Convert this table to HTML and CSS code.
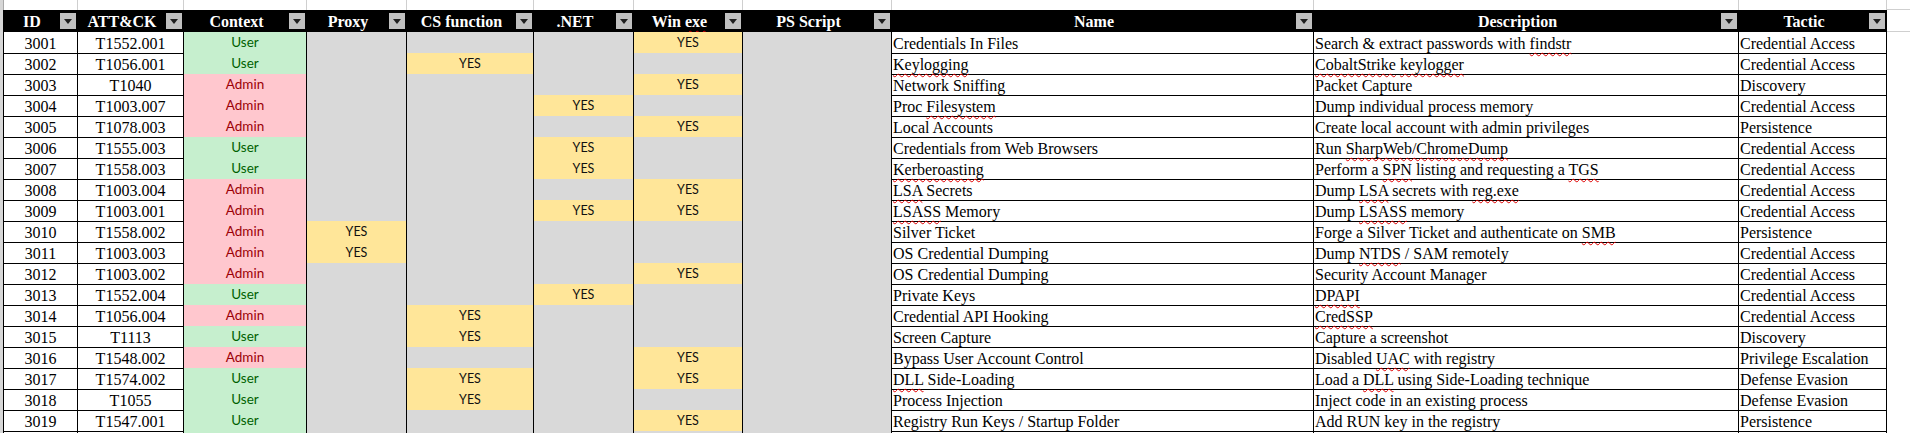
FILE: index.html
```html
<!DOCTYPE html>
<html>
<head>
<meta charset="utf-8">
<link rel="stylesheet" href="styles.css">
</head>
<body>
<div class="strip"></div>
<div class="sheet">
  <div class="row top">
    <div></div><div></div><div></div><div></div><div></div><div></div><div></div><div></div><div></div><div></div><div></div><div class="fill"></div>
  </div>
  <div class="row head">
    <div class="h"><span class="hl">ID</span><span class="btn"></span></div>
    <div class="h"><span class="hl">ATT&amp;CK</span><span class="btn"></span></div>
    <div class="h"><span class="hl">Context</span><span class="btn"></span></div>
    <div class="h"><span class="hl">Proxy</span><span class="btn"></span></div>
    <div class="h"><span class="hl">CS function</span><span class="btn"></span></div>
    <div class="h"><span class="hl">.NET</span><span class="btn"></span></div>
    <div class="h"><span class="hl">Win <span class="sp">exe</span></span><span class="btn"></span></div>
    <div class="h"><span class="hl">PS Script</span><span class="btn"></span></div>
    <div class="h"><span class="hl">Name</span><span class="btn"></span></div>
    <div class="h"><span class="hl">Description</span><span class="btn"></span></div>
    <div class="h"><span class="hl">Tactic</span><span class="btn"></span></div>
    <div class="fill"></div>
  </div>

  <div class="row"><div class="num">3001</div><div class="num">T1552.001</div><div class="ctx user">User</div><div class="no"></div><div class="no"></div><div class="no"></div><div class="yes">YES</div><div class="no"></div><div class="txt">Credentials In Files</div><div class="txt">Search &amp; extract passwords with <span class="sp">findstr</span></div><div class="txt">Credential Access</div><div class="fill"></div></div>
  <div class="row"><div class="num">3002</div><div class="num">T1056.001</div><div class="ctx user">User</div><div class="no"></div><div class="yes">YES</div><div class="no"></div><div class="no"></div><div class="no"></div><div class="txt"><span class="sp">Keylogging</span></div><div class="txt"><span class="sp">CobaltStrike</span> <span class="sp">keylogger</span></div><div class="txt">Credential Access</div><div class="fill"></div></div>
  <div class="row"><div class="num">3003</div><div class="num">T1040</div><div class="ctx admin">Admin</div><div class="no"></div><div class="no"></div><div class="no"></div><div class="yes">YES</div><div class="no"></div><div class="txt">Network Sniffing</div><div class="txt">Packet Capture</div><div class="txt">Discovery</div><div class="fill"></div></div>
  <div class="row"><div class="num">3004</div><div class="num">T1003.007</div><div class="ctx admin">Admin</div><div class="no"></div><div class="no"></div><div class="yes">YES</div><div class="no"></div><div class="no"></div><div class="txt">Proc <span class="sp">Filesystem</span></div><div class="txt">Dump individual process memory</div><div class="txt">Credential Access</div><div class="fill"></div></div>
  <div class="row"><div class="num">3005</div><div class="num">T1078.003</div><div class="ctx admin">Admin</div><div class="no"></div><div class="no"></div><div class="no"></div><div class="yes">YES</div><div class="no"></div><div class="txt">Local Accounts</div><div class="txt">Create local account with admin privileges</div><div class="txt">Persistence</div><div class="fill"></div></div>
  <div class="row"><div class="num">3006</div><div class="num">T1555.003</div><div class="ctx user">User</div><div class="no"></div><div class="no"></div><div class="yes">YES</div><div class="no"></div><div class="no"></div><div class="txt">Credentials from Web Browsers</div><div class="txt">Run <span class="sp">SharpWeb/ChromeDump</span></div><div class="txt">Credential Access</div><div class="fill"></div></div>
  <div class="row"><div class="num">3007</div><div class="num">T1558.003</div><div class="ctx user">User</div><div class="no"></div><div class="no"></div><div class="yes">YES</div><div class="no"></div><div class="no"></div><div class="txt"><span class="sp">Kerberoasting</span></div><div class="txt">Perform a <span class="sp">SPN</span> listing and requesting a <span class="sp">TGS</span></div><div class="txt">Credential Access</div><div class="fill"></div></div>
  <div class="row"><div class="num">3008</div><div class="num">T1003.004</div><div class="ctx admin">Admin</div><div class="no"></div><div class="no"></div><div class="no"></div><div class="yes">YES</div><div class="no"></div><div class="txt"><span class="sp">LSA</span> Secrets</div><div class="txt">Dump <span class="sp">LSA</span> secrets with <span class="sp">reg.exe</span></div><div class="txt">Credential Access</div><div class="fill"></div></div>
  <div class="row"><div class="num">3009</div><div class="num">T1003.001</div><div class="ctx admin">Admin</div><div class="no"></div><div class="no"></div><div class="yes">YES</div><div class="yes">YES</div><div class="no"></div><div class="txt"><span class="sp">LSASS</span> Memory</div><div class="txt">Dump <span class="sp">LSASS</span> memory</div><div class="txt">Credential Access</div><div class="fill"></div></div>
  <div class="row"><div class="num">3010</div><div class="num">T1558.002</div><div class="ctx admin">Admin</div><div class="yes">YES</div><div class="no"></div><div class="no"></div><div class="no"></div><div class="no"></div><div class="txt">Silver Ticket</div><div class="txt">Forge a Silver Ticket and authenticate on <span class="sp">SMB</span></div><div class="txt">Persistence</div><div class="fill"></div></div>
  <div class="row"><div class="num">3011</div><div class="num">T1003.003</div><div class="ctx admin">Admin</div><div class="yes">YES</div><div class="no"></div><div class="no"></div><div class="no"></div><div class="no"></div><div class="txt">OS Credential Dumping</div><div class="txt">Dump <span class="sp">NTDS</span> / SAM remotely</div><div class="txt">Credential Access</div><div class="fill"></div></div>
  <div class="row"><div class="num">3012</div><div class="num">T1003.002</div><div class="ctx admin">Admin</div><div class="no"></div><div class="no"></div><div class="no"></div><div class="yes">YES</div><div class="no"></div><div class="txt">OS Credential Dumping</div><div class="txt">Security Account Manager</div><div class="txt">Credential Access</div><div class="fill"></div></div>
  <div class="row"><div class="num">3013</div><div class="num">T1552.004</div><div class="ctx user">User</div><div class="no"></div><div class="no"></div><div class="yes">YES</div><div class="no"></div><div class="no"></div><div class="txt">Private Keys</div><div class="txt"><span class="sp">DPAPI</span></div><div class="txt">Credential Access</div><div class="fill"></div></div>
  <div class="row"><div class="num">3014</div><div class="num">T1056.004</div><div class="ctx admin">Admin</div><div class="no"></div><div class="yes">YES</div><div class="no"></div><div class="no"></div><div class="no"></div><div class="txt">Credential API Hooking</div><div class="txt"><span class="sp">CredSSP</span></div><div class="txt">Credential Access</div><div class="fill"></div></div>
  <div class="row"><div class="num">3015</div><div class="num">T1113</div><div class="ctx user">User</div><div class="no"></div><div class="yes">YES</div><div class="no"></div><div class="no"></div><div class="no"></div><div class="txt">Screen Capture</div><div class="txt">Capture a screenshot</div><div class="txt">Discovery</div><div class="fill"></div></div>
  <div class="row"><div class="num">3016</div><div class="num">T1548.002</div><div class="ctx admin">Admin</div><div class="no"></div><div class="no"></div><div class="no"></div><div class="yes">YES</div><div class="no"></div><div class="txt">Bypass User Account Control</div><div class="txt">Disabled <span class="sp">UAC</span> with registry</div><div class="txt">Privilege Escalation</div><div class="fill"></div></div>
  <div class="row"><div class="num">3017</div><div class="num">T1574.002</div><div class="ctx user">User</div><div class="no"></div><div class="yes">YES</div><div class="no"></div><div class="yes">YES</div><div class="no"></div><div class="txt"><span class="sp">DLL</span> Side-Loading</div><div class="txt">Load a <span class="sp">DLL</span> using Side-Loading technique</div><div class="txt">Defense Evasion</div><div class="fill"></div></div>
  <div class="row"><div class="num">3018</div><div class="num">T1055</div><div class="ctx user">User</div><div class="no"></div><div class="yes">YES</div><div class="no"></div><div class="no"></div><div class="no"></div><div class="txt">Process Injection</div><div class="txt">Inject code in an existing process</div><div class="txt">Defense Evasion</div><div class="fill"></div></div>
  <div class="row"><div class="num">3019</div><div class="num">T1547.001</div><div class="ctx user">User</div><div class="no"></div><div class="no"></div><div class="no"></div><div class="yes">YES</div><div class="no"></div><div class="txt">Registry Run Keys / Startup Folder</div><div class="txt">Add RUN key in the registry</div><div class="txt">Persistence</div><div class="fill"></div></div>
  <div class="row"><div class="num"></div><div class="num"></div><div class="ctx user"></div><div class="no"></div><div class="no"></div><div class="no"></div><div class="no"></div><div class="no"></div><div class="txt"></div><div class="txt"></div><div class="txt"></div><div class="fill"></div></div>
</div>
</body>
</html>
```

FILE: styles.css
```css
html, body {
  margin: 0;
  padding: 0;
}
body {
  width: 1910px;
  height: 433px;
  overflow: hidden;
  background: #ffffff;
  display: flex;
  font-family: "Liberation Serif", "Times New Roman", serif;
  font-size: 16px;
  color: #000;
}
.strip {
  flex: none;
  width: 3px;
  background: #d6d6d6;
}
.sheet {
  flex: 1;
  display: flex;
  flex-direction: column;
}
.row {
  flex: none;
  display: grid;
  grid-template-columns: 74px 106px 123px 100px 127px 100px 109px 149px 422px 425px 148px 1fr;
  height: 21px;
  border-left: 1px solid #000;
}
.row > div {
  box-sizing: border-box;
  border-right: 1px solid #000;
  border-bottom: 1px solid #000;
  white-space: nowrap;
  overflow: visible;
}
.row > .fill {
  border-right: none;
  border-bottom: 1px solid #cfcfcf;
  background: #fff;
}
.top {
  height: 10px;
  border-left: 1px solid #a8a8a8;
}
.top > div {
  border-right: 1px solid #cfcfcf;
  border-bottom: none;
}
.head {
  height: 22px;
}
.h {
  background: #000;
  color: #fff;
  font-weight: bold;
  display: flex;
}
.hl {
  flex: 1;
  text-align: center;
  padding-top: 2px;
  line-height: 19px;
}
.btn {
  flex: none;
  align-self: flex-end;
  width: 16px;
  height: 16px;
  margin: 0 1px 2px 0;
  background: #c0c0c0;
  display: flex;
  align-items: center;
  justify-content: center;
}
.btn::after {
  content: "";
  width: 0;
  height: 0;
  border-left: 4px solid transparent;
  border-right: 4px solid transparent;
  border-top: 5px solid #1e1e1e;
}
.num {
  text-align: center;
  padding-top: 3px;
  line-height: 18px;
}
.txt {
  text-align: left;
  padding-left: 1px;
  padding-top: 3px;
  line-height: 18px;
}
.ctx {
  text-align: center;
  font-family: Lato, "Noto Sans", sans-serif;
  font-size: 13.5px;
  padding-top: 1px;
  line-height: 18px;
}
.user {
  background: #c6efce;
  color: #006100;
}
.admin {
  background: #ffc7ce;
  color: #9c0006;
}
.no {
  background: #d9d9d9;
}
.yes {
  background: #ffe699;
  color: #111;
  text-align: center;
  font-family: Lato, "Noto Sans", sans-serif;
  font-size: 12.5px;
  padding-top: 2px;
  line-height: 17px;
}
.sp {
  text-decoration: underline wavy #e00000;
  text-decoration-thickness: 1px;
  text-underline-offset: 3px;
  text-decoration-skip-ink: none;
}
```
